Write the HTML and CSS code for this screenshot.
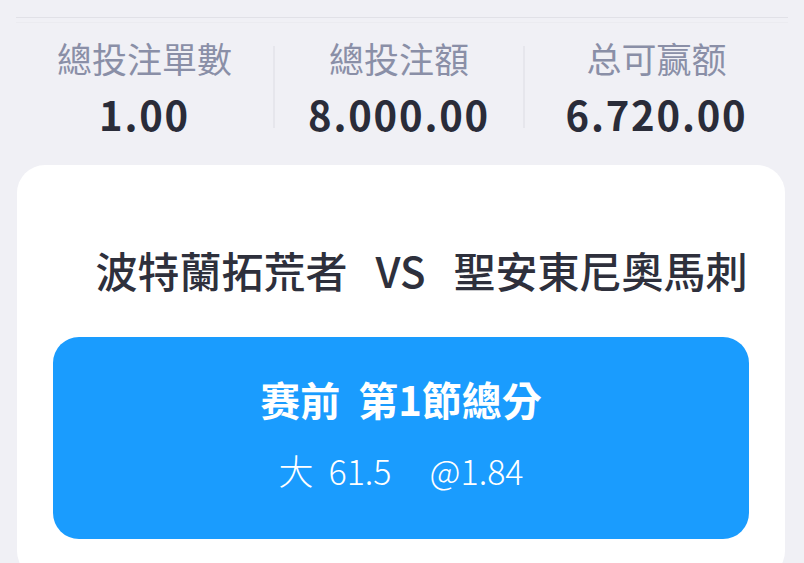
FILE: index.html
```html
<!DOCTYPE html>
<html lang="zh-Hant">
<head>
<meta charset="utf-8">
<title>投注</title>
<link rel="stylesheet" href="styles.css">
</head>
<body>
<div class="page">
  <div class="rule"></div>
  <div class="stats">
    <div class="stat">
      <div class="label">總投注單數</div>
      <div class="value">1.00</div>
    </div>
    <div class="divider"></div>
    <div class="stat">
      <div class="label">總投注額</div>
      <div class="value">8.000.00</div>
    </div>
    <div class="divider"></div>
    <div class="stat">
      <div class="label">总可赢额</div>
      <div class="value">6.720.00</div>
    </div>
  </div>
  <div class="card">
    <div class="match"><span>波特蘭拓荒者</span><span class="vs">VS</span><span>聖安東尼奧馬刺</span></div>
    <div class="bet">
      <div class="bet-title"><span class="gap">赛前</span>第1節總分</div>
      <div class="bet-pick"><span class="pick">大</span><span class="line">61.5</span><span>@1.84</span></div>
    </div>
  </div>
</div>
</body>
</html>
```
FILE: styles.css
```css
html, body {
  margin: 0;
  padding: 0;
  background: #f0f0f5;
}
body {
  font-family: "Noto Sans CJK TC", "Noto Sans", sans-serif;
  width: 804px;
  height: 563px;
  overflow: hidden;
}
.page {
  padding-top: 17px;
}
.rule {
  margin: 0 16px;
  height: 1px;
  background: #e1e1e7;
  box-shadow: 0 5px 0 #ebebf0;
}
.stats {
  display: grid;
  grid-template-columns: 257px 2px 248px 2px 1fr;
  align-items: center;
  margin: 0 16px;
  padding-top: 18px;
}
.stat {
  display: flex;
  flex-direction: column;
  align-items: center;
}
.label {
  font-size: 35px;
  line-height: 44px;
  color: #8a8fa7;
  font-weight: 400;
}
.value {
  margin-top: 10px;
  font-size: 40px;
  line-height: 48px;
  color: #2a2c39;
  font-weight: 600;
  letter-spacing: 1.8px;
}
.divider {
  width: 2px;
  height: 82px;
  background: #e6e6ec;
}
.card {
  margin: 27px 19px 0 17px;
  background: #ffffff;
  border-radius: 28px;
  padding: 77px 36px 40px;
}
.match {
  padding-left: 41px;
  text-align: center;
  font-size: 42px;
  line-height: 56px;
  font-weight: 500;
  color: #2e303c;
  white-space: nowrap;
}
.vs {
  margin: 0 28px;
}
.bet {
  margin-top: 39px;
  height: 202px;
  box-sizing: border-box;
  background: #1a9cfe;
  border-radius: 26px;
  padding-top: 37px;
  color: #ffffff;
  text-align: center;
}
.bet-title {
  font-size: 40px;
  line-height: 50px;
  font-weight: 700;
}
.gap {
  margin-right: 18px;
}
.bet-pick {
  margin-top: 24px;
  font-size: 34px;
  line-height: 44px;
  font-weight: 300;
}
.pick {
  font-size: 35px;
  margin-right: 15px;
}
.line {
  margin-right: 38px;
}
```
